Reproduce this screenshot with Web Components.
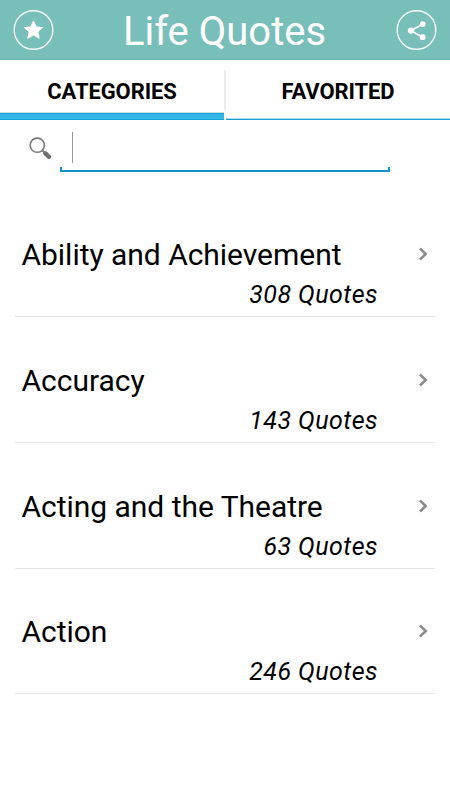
<!DOCTYPE html>
<html lang="en">
<head>
<meta charset="UTF-8">
<meta name="viewport" content="width=device-width, initial-scale=1.0">
<title>Life Quotes</title>
<style>
  body {
    margin: 0;
    background-color: #fff;
    color: #000;
    font-family: Roboto, "Liberation Sans", sans-serif;
    overflow: hidden;
  }
</style>
</head>
<body>
<quotes-app></quotes-app>

<script>
class RoundButton extends HTMLElement {
  constructor() {
    super();
    this.attachShadow({ mode: "open" });
  }

  connectedCallback() {
    const icons = {
      star: `<path fill="#fff" stroke="#fff" stroke-width="1" stroke-linejoin="round" d="M20 10.9l2.7 6 6.4.7-4.8 4.3 1.4 6.4-5.7-3.3-5.7 3.3 1.4-6.4-4.8-4.3 6.4-.7z"/>`,
      share: `<path fill="none" stroke="#fff" stroke-width="1.7" d="M26.3 14L14.5 20.7l11.8 6.6"/>
        <circle cx="26.2" cy="14.1" r="2.9" fill="#fff"/>
        <circle cx="14.4" cy="20.6" r="3.1" fill="#fff"/>
        <circle cx="26.2" cy="27.2" r="2.9" fill="#fff"/>`
    };

    this.shadowRoot.innerHTML = `
      <style>
        :host { display: block; width: 40px; height: 40px; }
        svg { display: block; overflow: visible; }
      </style>
      <svg width="40" height="40" viewBox="-0.5 0 40 40">
        <circle cx="20" cy="20" r="19.3" fill="none" stroke="#fff" stroke-opacity=".92" stroke-width="1.4"/>
        ${icons[this.getAttribute("icon")] || ""}
      </svg>
    `;
  }
}

class AppHeader extends HTMLElement {
  constructor() {
    super();
    this.attachShadow({ mode: "open" });
    this.shadowRoot.innerHTML = `
      <style>
        :host {
          display: flex;
          align-items: center;
          justify-content: space-between;
          box-sizing: border-box;
          height: 60px;
          padding: 0 14px 0 13px;
          background-color: #79bfb9;
          border-bottom: 1px solid #6cb6b0;
        }
        h1 {
          margin: 0;
          padding-top: 5px;
          font-size: 40px;
          line-height: 54px;
          font-weight: 400;
          color: #fff;
          white-space: nowrap;
        }
      </style>
      <round-button icon="star"></round-button>
      <h1><slot></slot></h1>
      <round-button icon="share"></round-button>
    `;
  }
}

class TabItem extends HTMLElement {
  constructor() {
    super();
    this.attachShadow({ mode: "open" });
    this.shadowRoot.innerHTML = `
      <style>
        :host {
          display: block;
          box-sizing: border-box;
          height: 60px;
          line-height: 63px;
          font-size: 22px;
          font-weight: 700;
          letter-spacing: -0.1px;
          text-align: center;
          border-bottom: 1px solid #1d9ed0;
          box-shadow: inset 0 -1px #a6dcf0;
        }
        :host([active]) {
          border-bottom: 1px solid #12a3d9;
          box-shadow: inset 0 -5px #33b5e5, inset 0 -6px #12a3d9, inset 0 -7px #c8dfe6;
        }
      </style>
      <slot></slot>
    `;
  }
}

class TabBar extends HTMLElement {
  constructor() {
    super();
    this.attachShadow({ mode: "open" });
    this.shadowRoot.innerHTML = `
      <style>
        :host {
          display: grid;
          grid-template-columns: 224px 2px 1fr;
          height: 60px;
        }
        ::slotted(tab-item:first-child) { grid-column: 1; }
        ::slotted(tab-item:last-child) { grid-column: 3; }
        .divider {
          grid-area: 1 / 2;
          height: 40px;
          margin-top: 10px;
          background-color: #ebebeb;
        }
      </style>
      <slot></slot>
      <div class="divider"></div>
    `;
  }
}

class SearchBox extends HTMLElement {
  constructor() {
    super();
    this.attachShadow({ mode: "open" });
    this.shadowRoot.innerHTML = `
      <style>
        :host {
          display: flex;
          height: 52px;
          padding: 0 60px 0 28px;
        }
        svg { display: block; margin-top: 16px; flex: none; }
        .field {
          flex: 1;
          display: flex;
          flex-direction: column;
          justify-content: space-between;
          margin-left: 8px;
        }
        .caret {
          width: 1px;
          height: 31px;
          margin: 11.5px 0 0 12px;
          background-color: #999;
        }
        .underline {
          box-sizing: border-box;
          height: 5px;
          border: 2px solid #1593c9;
          border-width: 0 2px 2px;
        }
      </style>
      <svg width="24" height="24" viewBox="0 0 24 24" fill="none">
        <circle cx="9.3" cy="9.2" r="7.1" stroke="#777" stroke-width="1.6"/>
        <path d="M14.2 14.2l2 2" stroke="#777" stroke-width="2"/>
        <path d="M17.4 17.4l3.6 3.4" stroke="#707070" stroke-width="4.4" stroke-linecap="round"/>
      </svg>
      <div class="field">
        <div class="caret"></div>
        <div class="underline"></div>
      </div>
    `;
  }
}

class CategoryRow extends HTMLElement {
  constructor() {
    super();
    this.attachShadow({ mode: "open" });
  }

  connectedCallback() {
    const name = this.getAttribute("name") || "";
    const count = this.getAttribute("count") || "0";

    this.shadowRoot.innerHTML = `
      <style>
        :host {
          display: grid;
          grid-template-columns: 1fr 57px;
          grid-template-rows: 40px 34px;
          row-gap: 3px;
          box-sizing: border-box;
          height: 125.6px;
          padding-top: 43.6px;
          border-bottom: 1px solid #e3e3e3;
        }
        h2 {
          margin: 0;
          padding-left: 6.5px;
          font-size: 30px;
          line-height: 40px;
          font-weight: 400;
          letter-spacing: -0.03px;
          white-space: nowrap;
        }
        p {
          margin: 0;
          font-size: 25px;
          line-height: 34px;
          font-style: italic;
          letter-spacing: 0.45px;
          text-align: right;
        }
        svg { display: block; margin: 11px 0 0 39px; }
      </style>
      <h2>${name}</h2>
      <svg width="14" height="16" viewBox="0 0 14 16">
        <path d="M2.9 2.4L8.7 8l-5.8 5.6" fill="none" stroke="#8c8c8c" stroke-width="2.6"/>
      </svg>
      <p>${count} Quotes</p>
    `;
  }
}

class QuotesApp extends HTMLElement {
  constructor() {
    super();
    this.attachShadow({ mode: "open" });
    this.shadowRoot.innerHTML = `
      <style>
        :host { display: block; }
        main { padding: 19.8px 15px 0; }
      </style>
      <app-header>Life Quotes</app-header>
      <tab-bar>
        <tab-item active>CATEGORIES</tab-item>
        <tab-item>FAVORITED</tab-item>
      </tab-bar>
      <search-box></search-box>
      <main>
        <category-row name="Ability and Achievement" count="308"></category-row>
        <category-row name="Accuracy" count="143"></category-row>
        <category-row name="Acting and the Theatre" count="63"></category-row>
        <category-row name="Action" count="246"></category-row>
      </main>
    `;
  }
}

customElements.define("round-button", RoundButton);
customElements.define("app-header", AppHeader);
customElements.define("tab-item", TabItem);
customElements.define("tab-bar", TabBar);
customElements.define("search-box", SearchBox);
customElements.define("category-row", CategoryRow);
customElements.define("quotes-app", QuotesApp);
</script>
</body>
</html>
